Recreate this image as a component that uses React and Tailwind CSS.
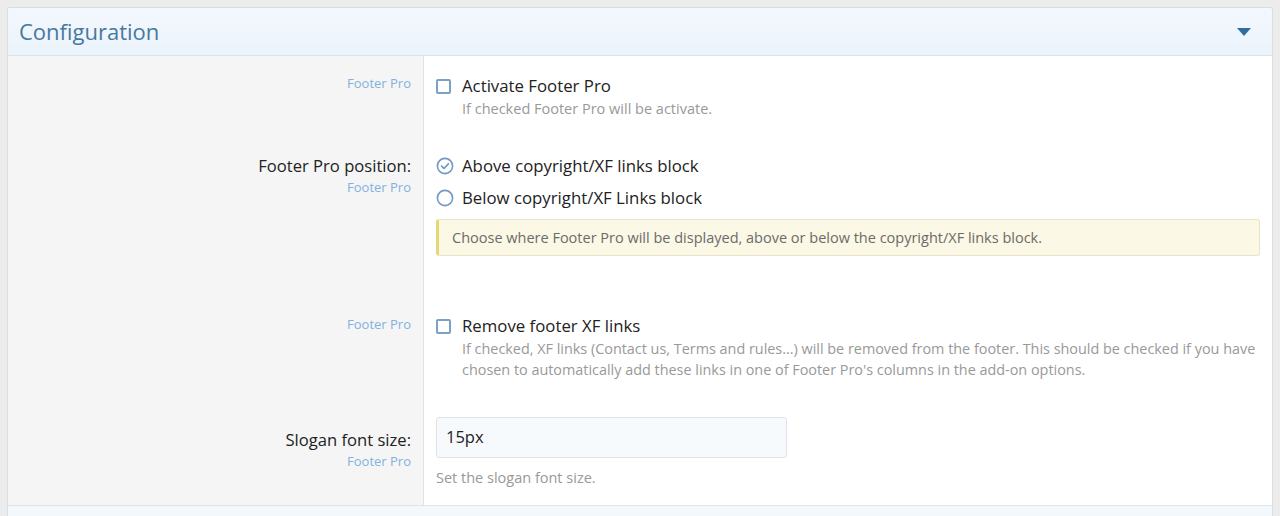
const font = { fontFamily: '"Open Sans", "Noto Sans", sans-serif' };

const Hint = ({ children }) => (
  <div className="text-[13px] leading-[21px] text-[#82b2de]">{children}</div>
);

const Checkbox = () => (
  <span className="inline-block w-[15px] h-[15px] border-2 border-[#7aa2c8] rounded-[2px] bg-white" />
);

const Radio = ({ checked }) => (
  <svg width="18" height="18" viewBox="0 0 18 18" className="shrink-0">
    <circle cx="9" cy="9" r="7.6" fill="white" stroke="#6f9ac2" strokeWidth="1.6" />
    {checked && (
      <path d="M5.6 9.2 L8 11.5 L12.4 6.8" fill="none" stroke="#6f9ac2" strokeWidth="1.7" strokeLinecap="round" strokeLinejoin="round" />
    )}
  </svg>
);

const Row = ({ label, labelClass, className, children }) => (
  <div className="flex">
    <div className={`w-[416px] shrink-0 bg-[#f5f5f5] border-r border-[#e2e2e2] pr-[12px] text-right ${labelClass}`}>
      {label && <div className="text-[16.6px] leading-[23px] text-[#222]">{label}</div>}
      <Hint>Footer Pro</Hint>
    </div>
    <div className={`flex-1 pl-[12px] ${className}`}>{children}</div>
  </div>
);

export default function App() {
  return (
    <div className="w-[1280px] h-[516px] bg-[#ececec] pt-[7px] px-[7px] overflow-hidden" style={font}>
      <div className="bg-white border border-[#dcdcdc] border-b-0 rounded-t-[3px] overflow-hidden">
        <div className="h-[48px] flex items-center justify-between pl-[11px] pr-[20px] bg-gradient-to-b from-[#f3f8fd] to-[#ebf3fb] border-b border-[#dbe5ee]">
          <h2 className="text-[22px] text-[#47799e]">Configuration</h2>
          <svg width="16" height="10" viewBox="0 0 16 10">
            <path d="M1 1 L15 1 L8 9 Z" fill="#2f6da0" />
          </svg>
        </div>

        <Row className="pt-[18px] pb-[19px] pr-[4px]" labelClass="pt-[17px]">
          <div className="flex items-center gap-[11px] h-[24px]">
            <Checkbox />
            <span className="text-[16.8px] text-[#222]">Activate Footer Pro</span>
          </div>
          <div className="pl-[26px] text-[14.5px] leading-[22px] text-[#999]">If checked Footer Pro will be activate.</div>
        </Row>

        <Row label="Footer Pro position:" className="pt-[15px] pb-[34px] pr-[12px]" labelClass="pt-[15px]">
          <div className="flex items-center gap-[8px] h-[24px]">
            <Radio checked />
            <span className="text-[16.8px] text-[#222]">Above copyright/XF links block</span>
          </div>
          <div className="flex items-center gap-[8px] h-[24px] mt-[8px]">
            <Radio />
            <span className="text-[16.8px] text-[#222]">Below copyright/XF Links block</span>
          </div>
          <div className="mt-[9px] h-[37px] flex items-center pl-[13px] bg-[#fcf8e6] border border-[#e9e3c9] border-l-[3px] border-l-[#e4d874] rounded-[3px] text-[14.5px] text-[#6b6b6b]">
            Choose where Footer Pro will be displayed, above or below the copyright/XF links block.
          </div>
        </Row>

        <Row className="pt-[24px] pb-[22px] pr-[4px]" labelClass="pt-[24px]">
          <div className="flex items-center gap-[11px] h-[24px]">
            <Checkbox />
            <span className="text-[16.8px] text-[#222]">Remove footer XF links</span>
          </div>
          <div className="pl-[26px] text-[14.4px] leading-[21px] text-[#999]">
            If checked, XF links (Contact us, Terms and rules...) will be removed from the footer. This should be checked if you have chosen to automatically add these links in one of Footer Pro's columns in the add-on options.
          </div>
        </Row>

        <Row label="Slogan font size:" className="pt-[15px] pb-[16px] pr-[12px] border-b border-[#e0e6ec]" labelClass="pt-[26px] border-b border-[#e0e6ec]">
          <div className="w-[351px] h-[41px] flex items-center px-[9px] bg-[#f7fafd] border border-[#dfe3e8] rounded-[3px] text-[16.5px] text-[#222]">
            15px
          </div>
          <div className="mt-[9px] text-[14.5px] leading-[22px] text-[#999]">Set the slogan font size.</div>
        </Row>

        <div className="h-[30px] bg-[#f3f8fd]" />
      </div>
    </div>
  );
}
